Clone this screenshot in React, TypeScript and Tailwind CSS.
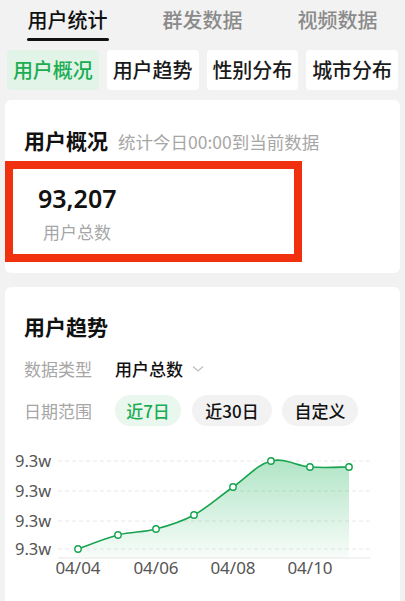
import React from "react";

const topTabs = ["用户统计", "群发数据", "视频数据"];
const subTabs = ["用户概况", "用户趋势", "性别分布", "城市分布"];

// chart points in svg coords
const pts: [number, number][] = [
  [73, 108],
  [113, 94],
  [151, 88],
  [189, 74],
  [228, 46],
  [266, 20],
  [305, 26],
  [344, 26],
];

function smooth(p: [number, number][]) {
  let d = `M${p[0][0]},${p[0][1]}`;
  for (let i = 0; i < p.length - 1; i++) {
    const p0 = p[i - 1] || p[i];
    const p1 = p[i];
    const p2 = p[i + 1];
    const p3 = p[i + 2] || p2;
    const t = 0.18;
    const c1x = p1[0] + (p2[0] - p0[0]) * t;
    const c1y = p1[1] + (p2[1] - p0[1]) * t;
    const c2x = p2[0] - (p3[0] - p1[0]) * t;
    const c2y = p2[1] - (p3[1] - p1[1]) * t;
    d += ` C${c1x},${c1y} ${c2x},${c2y} ${p2[0]},${p2[1]}`;
  }
  return d;
}

function Chart() {
  const line = smooth(pts);
  const area = `${line} L344,117 L73,117 Z`;
  const grid = [20, 50, 80, 108];
  return (
    <svg width="394" height="150" viewBox="0 0 394 150" className="block">
      <defs>
        <linearGradient id="fill" x1="0" y1="0" x2="0" y2="1">
          <stop offset="0%" stopColor="#1fb35a" stopOpacity="0.35" />
          <stop offset="100%" stopColor="#1fb35a" stopOpacity="0.03" />
        </linearGradient>
      </defs>
      {grid.map((y, i) => (
        <g key={i}>
          <line x1="53" x2="365" y1={y} y2={y} stroke="#e8e8e8" strokeDasharray="4 3" />
          <text x="10" y={y + 6} fontSize="16.5" fill="#555" fontFamily="'Noto Sans', sans-serif">
            9.3w
          </text>
        </g>
      ))}
      <path d={area} fill="url(#fill)" />
      <line x1="53" x2="365" y1="117" y2="117" stroke="#e6e6e6" />
      <path d={line} fill="none" stroke="#17a34f" strokeWidth="1.6" />
      {pts.map(([x, y], i) => (
        <circle key={i} cx={x} cy={y} r="3.2" fill="#fff" stroke="#17a34f" strokeWidth="1.4" />
      ))}
      {[["04/04", 73], ["04/06", 151], ["04/08", 228], ["04/10", 305]].map(([t, x]) => (
        <text key={t as string} x={x as number} y="133" fontSize="17" fill="#555" textAnchor="middle" fontFamily="'Noto Sans', sans-serif">
          {t}
        </text>
      ))}
    </svg>
  );
}

export default function App() {
  return (
    <div
      className="w-[405px] h-[601px] overflow-hidden bg-[#f2f2f2]"
      style={{ fontFamily: "'Noto Sans CJK SC', 'Noto Sans', sans-serif" }}
    >
      <div className="grid grid-cols-3 h-[46px]">
        {topTabs.map((t, i) => (
          <div key={t} className="flex flex-col items-center pt-[5px]">
            <div className={`text-[20px] leading-[29px] font-medium ${i === 0 ? "text-[#111]" : "text-[#8a8a8a]"}`}>{t}</div>
            {i === 0 && <div className="mt-[4px] w-[82px] h-[3px] bg-[#111] rounded-full" />}
          </div>
        ))}
      </div>

      <div className="grid grid-cols-4 gap-2 px-[7px] mt-[4px]">
        {subTabs.map((t, i) => (
          <div
            key={t}
            className={`h-[40px] rounded-[4px] flex items-center justify-center text-[20px] font-medium ${
              i === 0 ? "bg-[#e2f3e7] text-[#1aad52]" : "bg-white text-[#1a1a1a]"
            }`}
          >
            {t}
          </div>
        ))}
      </div>

      <div className="mx-[5px] mt-[10px] bg-white rounded-[6px] h-[173px] relative">
        <div className="flex items-baseline pt-[25px] pl-[19px]">
          <span className="text-[21px] font-bold text-[#111]">用户概况</span>
          <span className="ml-[10px] text-[17.5px] text-[#a6a6a6]">统计今日00:00到当前数据</span>
        </div>
        <div className="absolute left-0 top-[61px] w-[297px] h-[101px] border-[8px] border-[#f0300f] pl-[25px] pt-[12px]">
          <div className="text-[25px] font-semibold text-[#111] leading-[34px]" style={{ fontFamily: "'Noto Sans', sans-serif" }}>93,207</div>
          <div className="mt-[4px] ml-[5px] text-[17px] text-[#a6a6a6]">用户总数</div>
        </div>
      </div>

      <div className="mx-[5px] mt-[14px] bg-white rounded-t-[6px] h-[400px]">
        <div className="pt-[24px] pl-[19px] text-[21px] font-bold text-[#111] leading-[30px]">用户趋势</div>
        <div className="flex items-center pl-[19px] mt-[14px] h-[28px]">
          <span className="text-[17px] text-[#a6a6a6]">数据类型</span>
          <span className="ml-[23px] text-[17px] text-[#111] font-medium">用户总数</span>
          <svg width="12" height="8" viewBox="0 0 12 8" className="ml-[9px]">
            <path d="M1 1.5 L6 6 L11 1.5" fill="none" stroke="#bcbcbc" strokeWidth="1.2" />
          </svg>
        </div>
        <div className="flex items-center pl-[19px] mt-[12px]">
          <span className="text-[17px] text-[#a6a6a6]">日期范围</span>
          <span className="ml-[23px] h-[31px] w-[66px] rounded-full bg-[#eaf7ee] text-[#1aad52] text-[17px] font-medium flex items-center justify-center">近7日</span>
          <span className="ml-[11px] h-[31px] w-[80px] rounded-full bg-[#f2f2f2] text-[#111] text-[17px] font-medium flex items-center justify-center">近30日</span>
          <span className="ml-[10px] h-[31px] w-[76px] rounded-full bg-[#f2f2f2] text-[#111] text-[17px] font-medium flex items-center justify-center">自定义</span>
        </div>
        <div className="mt-[15px]">
          <Chart />
        </div>
      </div>
    </div>
  );
}
